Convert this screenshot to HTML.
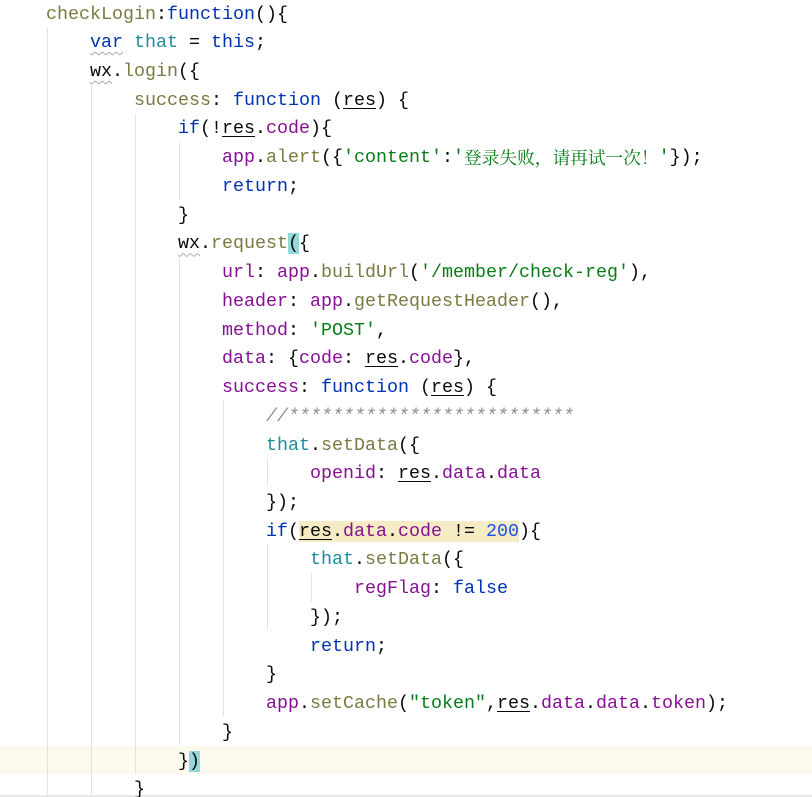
<!DOCTYPE html>
<html><head><meta charset="utf-8"><style>
html,body{margin:0;padding:0;background:#fff;width:812px;height:797px;overflow:hidden;}
body{position:relative;font-family:"Liberation Mono","DejaVu Sans Mono",monospace;font-size:18.33px;color:#080808;}
.r{position:absolute;left:0;height:28.73px;line-height:28.73px;white-space:pre;margin-top:1.5px}
.k{color:#0033b3}.t{color:#1f8c9e}.f{color:#7a7a43}.p{color:#871094}.s{color:#067d17}.n{color:#1750eb}
.c{color:#8c8c8c;font-style:italic}
.u{text-decoration:underline;text-decoration-color:#080808;text-underline-offset:3px}
.w{text-decoration:underline wavy #aaa;text-decoration-thickness:1px;text-underline-offset:4px}
.b{background:#93d9d9}
.h{background:#f5ebc4}
.cn{font-family:"Noto Serif CJK SC",serif;font-size:17.7px;line-height:1;display:inline-block;vertical-align:-2px}
.g{position:absolute;width:1px;background:#e3e3e3}
</style></head><body>
<div style="position:absolute;left:0;top:745.5px;width:812px;height:28.7px;background:#fcfaed"></div>
<div style="position:absolute;left:0;top:795px;width:812px;height:2px;background:#e8e8e8"></div>
<div class="g" style="left:47px;top:28px;height:769px"></div>
<div class="g" style="left:91px;top:85px;height:712px"></div>
<div class="g" style="left:135px;top:114px;height:660px"></div>
<div class="g" style="left:179px;top:142px;height:58px"></div>
<div class="g" style="left:179px;top:257px;height:488px"></div>
<div class="g" style="left:223px;top:400px;height:316px"></div>
<div class="g" style="left:267px;top:458px;height:28px"></div>
<div class="g" style="left:267px;top:544px;height:86px"></div>
<div class="g" style="left:311px;top:573px;height:29px"></div>

<div class="r" style="top:-1px;left:46px"><span class="f">checkLogin</span>:<span class="k">function</span>(){</div>
<div class="r" style="top:27.7px;left:90px"><span class="k w">var</span> <span class="t">that</span> = <span class="k">this</span>;</div>
<div class="r" style="top:56.5px;left:90px"><span class="w">wx</span>.<span class="f">login</span>({</div>
<div class="r" style="top:85.2px;left:134px"><span class="f">success</span>: <span class="k">function</span> (<span class="u">res</span>) {</div>
<div class="r" style="top:113.9px;left:178px"><span class="k">if</span>(!<span class="u">res</span>.<span class="p">code</span>){</div>
<div class="r" style="top:142.7px;left:222px"><span class="p">app</span>.<span class="f">alert</span>({<span class="s">'content'</span>:<span class="s">'<span class="cn">登录失败，请再试一次！</span>'</span>});</div>
<div class="r" style="top:171.4px;left:222px"><span class="k">return</span>;</div>
<div class="r" style="top:200.1px;left:178px">}</div>
<div class="r" style="top:228.8px;left:178px"><span class="w">wx</span>.<span class="f">request</span><span class="b">(</span>{</div>
<div class="r" style="top:257.6px;left:222px"><span class="p">url</span>: <span class="p">app</span>.<span class="f">buildUrl</span>(<span class="s">'/member/check-reg'</span>),</div>
<div class="r" style="top:286.3px;left:222px"><span class="p">header</span>: <span class="p">app</span>.<span class="f">getRequestHeader</span>(),</div>
<div class="r" style="top:315px;left:222px"><span class="p">method</span>: <span class="s">'POST'</span>,</div>
<div class="r" style="top:343.8px;left:222px"><span class="p">data</span>: {<span class="p">code</span>: <span class="u">res</span>.<span class="p">code</span>},</div>
<div class="r" style="top:372.5px;left:222px"><span class="p">success</span>: <span class="k">function</span> (<span class="u">res</span>) {</div>
<div class="r" style="top:401.2px;left:266px"><span class="c">//**************************</span></div>
<div class="r" style="top:430px;left:266px"><span class="t">that</span>.<span class="f">setData</span>({</div>
<div class="r" style="top:458.7px;left:310px"><span class="p">openid</span>: <span class="u">res</span>.<span class="p">data</span>.<span class="p">data</span></div>
<div class="r" style="top:487.4px;left:266px">});</div>
<div class="r" style="top:516.1px;left:266px"><span class="k">if</span>(<span class="h"><span class="u">res</span>.<span class="p">data</span>.<span class="p">code</span> != <span class="n">200</span></span>){</div>
<div class="r" style="top:544.9px;left:310px"><span class="t">that</span>.<span class="f">setData</span>({</div>
<div class="r" style="top:573.6px;left:354px"><span class="p">regFlag</span>: <span class="k">false</span></div>
<div class="r" style="top:602.3px;left:310px">});</div>
<div class="r" style="top:631.1px;left:310px"><span class="k">return</span>;</div>
<div class="r" style="top:659.8px;left:266px">}</div>
<div class="r" style="top:688.5px;left:266px"><span class="p">app</span>.<span class="f">setCache</span>(<span class="s">"token"</span>,<span class="u">res</span>.<span class="p">data</span>.<span class="p">data</span>.<span class="p">token</span>);</div>
<div class="r" style="top:717.2px;left:222px">}</div>
<div class="r" style="top:746px;left:178px;margin-top:0;padding-top:1.5px;height:27px">}<span class="b">)</span></div>
<div class="r" style="top:774.7px;left:134px">}</div>
</body></html>
